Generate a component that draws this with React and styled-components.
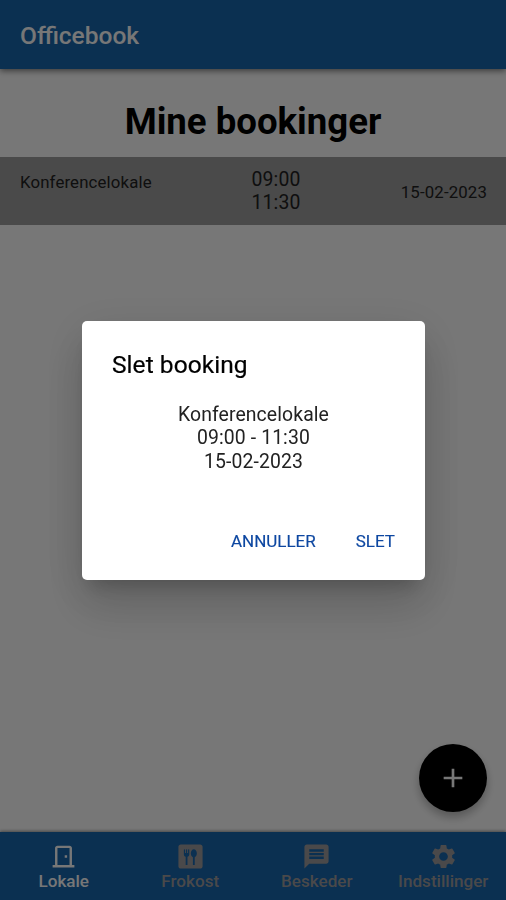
import React from "react";
import styled, { createGlobalStyle } from "styled-components";
import {
  MdAdd,
  MdDining,
  MdMessage,
  MdOutlineDoorFront,
  MdSettings,
} from "react-icons/md";

const GlobalStyle = createGlobalStyle`
  * { box-sizing: border-box; }
  body { margin: 0; font-family: Roboto, sans-serif; color: #000; }
  button { font: inherit; border: 0; background: none; padding: 0; }
`;

const Screen = styled.div`
  height: 900px;
  display: flex;
  flex-direction: column;
  background: #fff;
  overflow: hidden;
`;

const AppBar = styled.header`
  height: 69px;
  flex: none;
  display: flex;
  align-items: center;
  padding: 3px 20px 0;
  background: #1867ae;
  color: #fff;
  font-size: 24.5px;
  line-height: 28px;
  font-weight: 500;
  box-shadow: 0 2px 6px rgba(0, 0, 0, 0.5);
`;

const Content = styled.main`
  flex: 1;
`;

const Heading = styled.h1`
  margin: 0;
  height: 88px;
  padding-top: 31px;
  text-align: center;
  font-size: 36.6px;
  line-height: 43px;
  font-weight: 700;
`;

const BookingRow = styled.div`
  height: 68px;
  padding: 0 19px 0 20px;
  display: grid;
  grid-template-columns: 206px 100px 1fr;
  background: #9e9e9e;
  color: #222;
`;

const Room = styled.span`
  padding-top: 15px;
  font-size: 16.8px;
  line-height: 20px;
  letter-spacing: 0.15px;
`;

const Times = styled.span`
  padding-top: 11px;
  text-align: center;
  font-size: 19.4px;
  line-height: 23px;
  letter-spacing: 0.1px;
`;

const DateText = styled.span`
  padding-top: 25px;
  text-align: right;
  font-size: 16.8px;
  line-height: 20px;
  letter-spacing: 0.15px;
`;

const Fab = styled.button`
  position: fixed;
  left: 419px;
  top: 744px;
  width: 68px;
  height: 68px;
  border-radius: 50%;
  display: flex;
  align-items: center;
  justify-content: center;
  background: #000;
  color: #fff;
  font-size: 32px;
  box-shadow: 0 5px 10px rgba(0, 0, 0, 0.28);
`;

const NavBar = styled.nav`
  height: 68px;
  flex: none;
  display: grid;
  grid-template-columns: repeat(4, 1fr);
  background: #1867ae;
  box-shadow: 0 -1px 3px rgba(0, 0, 0, 0.4);
`;

const NavItem = styled.button`
  display: flex;
  flex-direction: column;
  align-items: center;
  padding: 10px 0 0 1px;
  font-size: 17.1px;
  line-height: 20px;
  font-weight: 500;
  color: ${(p) => (p.$active ? "#fff" : "#9f9d9e")};

  svg {
    width: 29px;
    height: 29px;
    flex: none;
  }
`;

const Scrim = styled.div`
  position: fixed;
  inset: 0;
  display: flex;
  justify-content: center;
  align-items: flex-start;
  padding: 321px 0 0 1px;
  background: rgba(0, 0, 0, 0.535);
`;

const Dialog = styled.section`
  width: 343px;
  height: 259px;
  display: flex;
  flex-direction: column;
  padding: 30px;
  border-radius: 5px;
  background: #fff;
  box-shadow: 0 13px 18px -8px rgba(0, 0, 0, 0.2),
    0 28px 45px 3px rgba(0, 0, 0, 0.12), 0 10px 50px 8px rgba(0, 0, 0, 0.08);
`;

const DialogTitle = styled.h2`
  margin: 0;
  font-size: 24.5px;
  line-height: 28px;
  font-weight: 400;
  letter-spacing: 0.05px;
  -webkit-text-stroke: 0.2px currentColor;
`;

const DialogBody = styled.div`
  margin-top: 24px;
  text-align: center;
  font-size: 19.4px;
  line-height: 23.3px;
  letter-spacing: 0.1px;
  color: #222;
`;

const Actions = styled.div`
  margin-top: auto;
  margin-bottom: -1px;
  display: flex;
  justify-content: flex-end;
  gap: 40px;
`;

const Action = styled.button`
  color: #0d47a1;
  font-size: 17px;
  line-height: 20px;
  -webkit-text-stroke: 0.15px currentColor;
`;

const tabs = [
  { label: "Lokale", Icon: MdOutlineDoorFront, active: true },
  { label: "Frokost", Icon: MdDining },
  { label: "Beskeder", Icon: MdMessage },
  { label: "Indstillinger", Icon: MdSettings },
];

export default function App() {
  return (
    <>
      <GlobalStyle />
      <Screen>
        <AppBar>Officebook</AppBar>
        <Content>
          <Heading>Mine bookinger</Heading>
          <BookingRow>
            <Room>Konferencelokale</Room>
            <Times>
              09:00
              <br />
              11:30
            </Times>
            <DateText>15-02-2023</DateText>
          </BookingRow>
        </Content>
        <NavBar>
          {tabs.map(({ label, Icon, active }) => (
            <NavItem key={label} $active={active}>
              <Icon />
              {label}
            </NavItem>
          ))}
        </NavBar>
      </Screen>
      <Fab aria-label="Ny booking">
        <MdAdd />
      </Fab>
      <Scrim>
        <Dialog role="dialog">
          <DialogTitle>Slet booking</DialogTitle>
          <DialogBody>
            Konferencelokale
            <br />
            09:00 - 11:30
            <br />
            15-02-2023
          </DialogBody>
          <Actions>
            <Action>ANNULLER</Action>
            <Action>SLET</Action>
          </Actions>
        </Dialog>
      </Scrim>
    </>
  );
}
